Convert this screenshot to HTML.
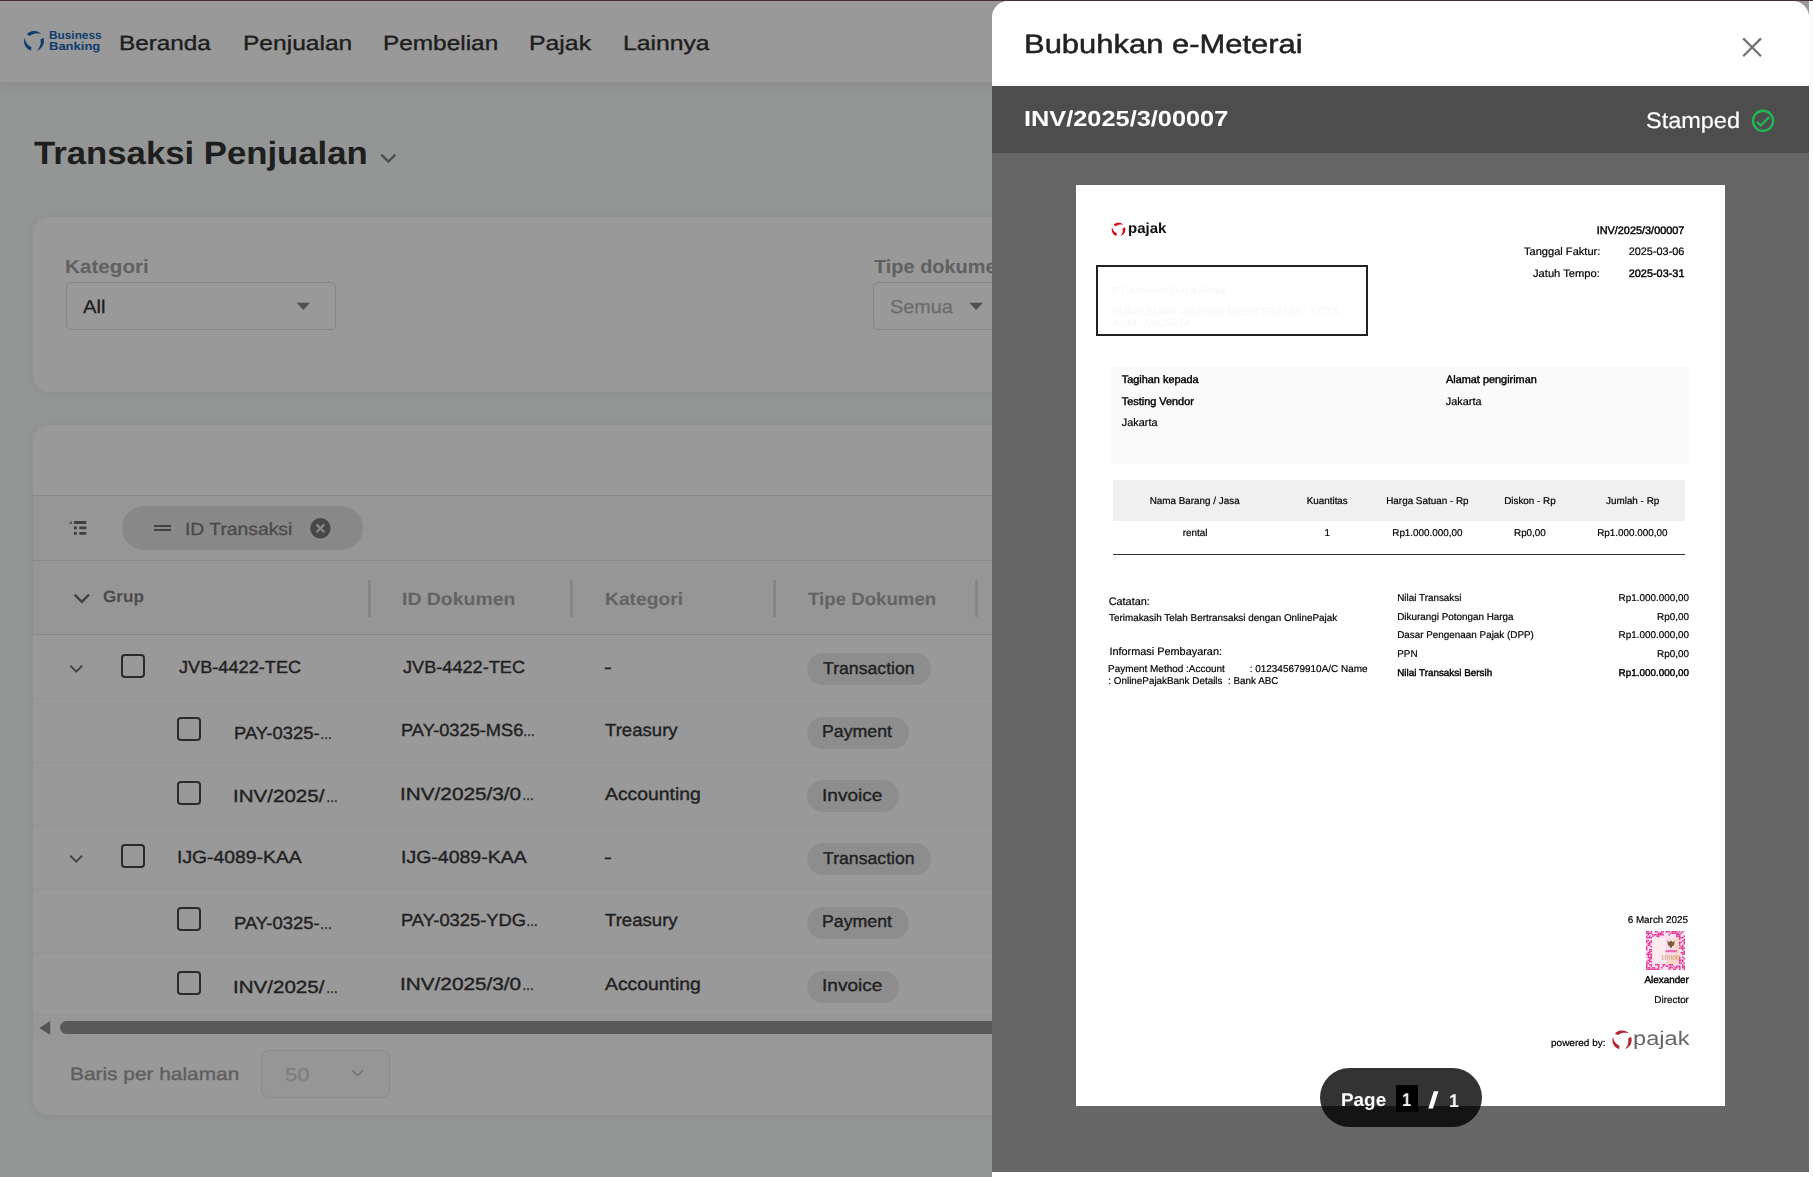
<!DOCTYPE html>
<html lang="id">
<head>
<meta charset="utf-8">
<title>Transaksi Penjualan - Bubuhkan e-Meterai</title>
<style>
html,body{margin:0;padding:0;}
body{width:1813px;height:1177px;overflow:hidden;position:relative;background:#f7faf9;
  font-family:"Liberation Sans",sans-serif;text-rendering:geometricPrecision;-webkit-font-smoothing:antialiased;}
.t{position:absolute;white-space:nowrap;line-height:1;transform-origin:0 0;display:block;}
.abs{position:absolute;}
.g{will-change:transform;}
#app{position:absolute;left:0;top:0;width:1809px;height:1177px;overflow:hidden;background:#f7faf9;}
#nav{position:absolute;left:0;top:0;width:1809px;height:82px;background:#fff;box-shadow:0 3px 10px rgba(0,0,0,.07);}
.card{position:absolute;background:#fff;border-radius:16px;box-shadow:0 1px 10px rgba(0,0,0,.07);}
.sel{position:absolute;box-sizing:border-box;border:1px solid #dcdcdc;border-radius:5px;background:#fff;}
.chip{position:absolute;background:#ececec;border-radius:16px;height:32px;}
.cb{position:absolute;box-sizing:border-box;width:24px;height:24px;border:2.9px solid #484848;border-radius:4px;}
.hl{position:absolute;left:0;height:1px;background:#e6e6e6;}
.sep{position:absolute;width:3px;top:154.5px;height:37px;background:#e0e0e0;}
#overlay{position:absolute;left:0;top:0;width:1809px;height:1177px;background:rgba(0,0,0,.4);}
#panel{position:absolute;left:992px;top:1px;width:817px;height:1176px;background:#fff;border-radius:16px 16px 0 0;overflow:hidden;}
#bar{position:absolute;left:0;top:85px;width:817px;height:67px;background:#4d4d4d;}
#viewer{position:absolute;left:0;top:152px;width:817px;height:1019px;background:#666;}
#doc{position:absolute;left:84px;top:32px;width:649px;height:921px;background:#fff;overflow:hidden;}
#docin{position:absolute;left:0;top:0;width:649px;height:921px;will-change:transform;}
#pill{position:absolute;left:328px;top:915px;width:162px;height:59px;border-radius:30px;background:rgba(0,0,0,.8);}
#topline{position:absolute;left:0;top:0;width:1813px;height:1px;background:#4e2c36;}
#rstrip{position:absolute;left:1809px;top:1px;width:4px;height:1176px;background:#fbfbfb;}
</style>
</head>
<body>

<div id="app">
<div id="nav">
<svg class="abs" style="left:21.75px;top:28.8px" width="24" height="24" viewBox="-12 -12 24 24"><g fill="#1a66b8"><path d="M-7.31,-6.82 L-6.48,-7.62 L-5.55,-8.32 L-4.55,-8.90 L-3.49,-9.37 L-2.38,-9.71 L-1.24,-9.92 L-0.09,-10.00 L1.07,-9.94 L2.21,-9.75 L3.33,-9.43 L4.39,-8.98 L5.40,-8.41 L6.34,-7.73 L7.19,-6.95 L7.19,-6.95 L6.07,-7.29 L4.99,-7.52 L3.95,-7.64 L2.97,-7.67 L2.03,-7.62 L1.15,-7.50 L0.32,-7.33 L-0.46,-7.11 L-1.20,-6.85 L-1.90,-6.55 L-2.55,-6.21 L-3.18,-5.84 L-3.77,-5.43 L-4.33,-4.98Z"/><path d="M9.46,-3.26 L9.77,-2.14 L9.95,-1.00 L10.00,0.16 L9.91,1.32 L9.69,2.46 L9.34,3.56 L8.87,4.62 L8.28,5.61 L7.57,6.53 L6.77,7.36 L5.87,8.10 L4.89,8.72 L3.85,9.23 L2.76,9.61 L2.76,9.61 L3.59,8.78 L4.30,7.93 L4.89,7.08 L5.38,6.22 L5.77,5.37 L6.09,4.54 L6.32,3.73 L6.50,2.93 L6.61,2.16 L6.67,1.40 L6.68,0.66 L6.65,-0.07 L6.56,-0.78 L6.43,-1.48Z"/><path d="M-2.92,9.56 L-4.01,9.16 L-5.04,8.64 L-6.01,7.99 L-6.89,7.25 L-7.68,6.40 L-8.37,5.47 L-8.95,4.46 L-9.41,3.40 L-9.74,2.29 L-9.93,1.14 L-10.00,-0.01 L-9.93,-1.17 L-9.73,-2.31 L-9.40,-3.42 L-9.40,-3.42 L-9.22,-2.26 L-8.94,-1.19 L-8.60,-0.20 L-8.19,0.70 L-7.74,1.51 L-7.25,2.26 L-6.73,2.93 L-6.19,3.53 L-5.63,4.08 L-5.05,4.57 L-4.46,5.02 L-3.85,5.42 L-3.23,5.77 L-2.58,6.08Z"/></g></svg>
<span class="t" style="left:48.83px;top:31px;font-size:11.5px;color:#1a66b8;font-weight:700;transform:scaleX(1.0287);">Business</span>
<span class="t" style="left:48.75px;top:42px;font-size:11.5px;color:#1a66b8;font-weight:700;transform:scaleX(1.1305);">Banking</span>
<span class="t" style="left:118.66px;top:34px;font-size:20.6px;color:#333;transform:scaleX(1.1792);-webkit-text-stroke:.35px #333;">Beranda</span>
<span class="t" style="left:243.34px;top:34px;font-size:20.6px;color:#333;transform:scaleX(1.1919);-webkit-text-stroke:.35px #333;">Penjualan</span>
<span class="t" style="left:383.25px;top:34px;font-size:20.6px;color:#333;transform:scaleX(1.1837);-webkit-text-stroke:.35px #333;">Pembelian</span>
<span class="t" style="left:529.21px;top:34px;font-size:20.6px;color:#333;transform:scaleX(1.2051);-webkit-text-stroke:.35px #333;">Pajak</span>
<span class="t" style="left:623.22px;top:34px;font-size:20.6px;color:#333;transform:scaleX(1.1991);-webkit-text-stroke:.35px #333;">Lainnya</span>
</div>
<span class="t" style="left:34.25px;top:137px;font-size:32.2px;color:#333;font-weight:700;transform:scaleX(1.0783);">Transaksi Penjualan</span>
<svg class="abs" style="left:378px;top:150px" width="20" height="16" viewBox="0 0 20 16"><path d="M3.3,4.6 L10.3,11.6 L17.3,4.6" fill="none" stroke="#7a828b" stroke-width="2.2"/></svg>
<div class="card" style="left:33px;top:217px;width:1800px;height:175px;"></div>
<span class="t" style="left:65.06px;top:258px;font-size:19px;color:#a2a2a2;font-weight:700;transform:scaleX(1.0875);">Kategori</span>
<div class="sel" style="left:66px;top:282px;width:270px;height:48px;"></div>
<span class="t" style="left:82.50px;top:298px;font-size:18.6px;color:#333;transform:scaleX(1.0906);-webkit-text-stroke:.25px #333;">All</span>
<svg class="abs" style="left:296px;top:302px" width="15" height="9" viewBox="0 0 15 9"><path d="M0.6,0.8 H14 L7.3,8 Z" fill="#858585"/></svg>
<span class="t" style="left:874.00px;top:258px;font-size:19px;color:#a0a0a0;font-weight:700;transform:scaleX(1.0487);">Tipe dokumen</span>
<div class="sel" style="left:873px;top:282px;width:270px;height:48px;"></div>
<span class="t" style="left:889.71px;top:298px;font-size:18.6px;color:#b4b4b4;transform:scaleX(1.0649);-webkit-text-stroke:.25px #b4b4b4;">Semua</span>
<svg class="abs" style="left:969px;top:302px" width="15" height="9" viewBox="0 0 15 9"><path d="M0.4,0.8 H14 L7.2,8 Z" fill="#858585"/></svg>
<div class="card" style="left:33px;top:425px;width:1800px;height:690px;overflow:hidden;">
<div class="abs" style="left:0;top:70px;width:1800px;height:139px;background:#f8faf9;"></div>
<div class="hl" style="top:69.5px;width:1800px;background:#e4e4e4;"></div>
<div class="hl" style="top:135px;width:1800px;background:#e4e4e4;"></div>
<div class="hl" style="top:209px;width:1800px;background:#e0e0e0;"></div>
<div class="hl" style="top:273px;width:1800px;background:#f7f7f7;"></div>
<div class="hl" style="top:336.5px;width:1800px;background:#f7f7f7;"></div>
<div class="hl" style="top:400px;width:1800px;background:#f7f7f7;"></div>
<div class="hl" style="top:463px;width:1800px;background:#f7f7f7;"></div>
<div class="hl" style="top:526.5px;width:1800px;background:#f7f7f7;"></div>
<div class="hl" style="top:590px;width:1800px;background:#f7f7f7;"></div>
<div class="sep" style="left:335.0px;"></div>
<div class="sep" style="left:537.1px;"></div>
<div class="sep" style="left:740.0px;"></div>
<div class="sep" style="left:942.3px;"></div>
</div>
<svg class="abs" style="left:68px;top:520px" width="20" height="16" viewBox="0 0 20 16">
<g fill="#6c6c6c"><path d="M0.8,3.8 L3.7,1.1 V3.8 Z"/><rect x="5.9" y="1.1" width="12.5" height="2.8" rx=".8"/>
<rect x="5.9" y="6.5" width="3" height="2.8"/><rect x="11.2" y="6.5" width="7.2" height="2.8" rx=".8"/>
<rect x="5.9" y="11.9" width="3" height="2.8"/><rect x="11.2" y="11.9" width="7.2" height="2.8" rx=".8"/></g></svg>
<div class="abs" style="left:122px;top:506px;width:241px;height:44px;border-radius:22px;background:#e3e3e3;"></div>
<div class="abs" style="left:154.2px;top:524.9px;width:16.4px;height:2.3px;background:#6e6e6e;"></div>
<div class="abs" style="left:154.2px;top:528.8px;width:16.4px;height:2.3px;background:#6e6e6e;"></div>
<span class="t" style="left:185.06px;top:521px;font-size:17.5px;color:#7c7c7c;transform:scaleX(1.1026);-webkit-text-stroke:.3px #7c7c7c;">ID Transaksi</span>
<svg class="abs" style="left:309.5px;top:517.8px" width="21" height="21" viewBox="0 0 21 21"><circle cx="10.4" cy="10.3" r="10.2" fill="#787878"/><path d="M6.5,6.4 L14.3,14.2 M14.3,6.4 L6.5,14.2" stroke="#e3e3e3" stroke-width="2.2" fill="none"/></svg>
<svg class="abs" style="left:72px;top:590px" width="20" height="16" viewBox="0 0 20 16"><path d="M2.6,4.6 L9.8,11.8 L17,4.6" fill="none" stroke="#6a6a6a" stroke-width="2.3"/></svg>
<span class="t" style="left:102.82px;top:589px;font-size:16.4px;color:#7e7e7e;font-weight:700;transform:scaleX(1.0427);">Grup</span>
<span class="t" style="left:402.24px;top:591px;font-size:17.8px;color:#a6a6a6;font-weight:700;transform:scaleX(1.0931);">ID Dokumen</span>
<span class="t" style="left:604.75px;top:591px;font-size:17.8px;color:#a6a6a6;font-weight:700;transform:scaleX(1.0821);">Kategori</span>
<span class="t" style="left:808.21px;top:591px;font-size:17.8px;color:#a6a6a6;font-weight:700;transform:scaleX(1.0492);">Tipe Dokumen</span>
<svg class="abs" style="left:68px;top:662.8px" width="16" height="12" viewBox="0 0 16 12"><path d="M2.2,2.6 L8.2,8.6 L14.2,2.6" fill="none" stroke="#707070" stroke-width="2"/></svg>
<div class="cb" style="left:120.8px;top:654.3px;"></div>
<span class="t" style="left:178.73px;top:659px;font-size:17.6px;color:#383838;transform:scaleX(1.0325);-webkit-text-stroke:.38px #383838;">JVB-4422-TEC</span>
<span class="t" style="left:402.53px;top:659px;font-size:17.6px;color:#383838;transform:scaleX(1.0317);-webkit-text-stroke:.38px #383838;">JVB-4422-TEC</span>
<span class="t" style="left:603.87px;top:659px;font-size:17.6px;color:#383838;transform:scaleX(1.3182);-webkit-text-stroke:.38px #383838;">-</span>
<div class="chip" style="left:807px;top:652.9px;width:123.8px;"></div><span class="t" style="left:823.45px;top:660px;font-size:17px;color:#383838;transform:scaleX(1.0394);-webkit-text-stroke:.38px #383838;">Transaction</span>
<div class="cb" style="left:177.3px;top:717.4px;"></div>
<span class="t" style="left:233.83px;top:725px;font-size:17.6px;color:#383838;transform:scaleX(1.0448);-webkit-text-stroke:.38px #383838;">PAY-0325-</span><span class="t" style="left:319.57px;top:725px;font-size:17.6px;color:#383838;transform:scaleX(0.6849);-webkit-text-stroke:.38px #383838;">…</span>
<span class="t" style="left:400.84px;top:722px;font-size:17.6px;color:#383838;transform:scaleX(1.0371);-webkit-text-stroke:.38px #383838;">PAY-0325-MS6</span><span class="t" style="left:523.47px;top:722px;font-size:17.6px;color:#383838;transform:scaleX(0.6849);-webkit-text-stroke:.38px #383838;">…</span>
<span class="t" style="left:604.83px;top:722px;font-size:17.6px;color:#383838;transform:scaleX(1.0560);-webkit-text-stroke:.38px #383838;">Treasury</span>
<div class="chip" style="left:807px;top:716.8px;width:102.1px;"></div><span class="t" style="left:822.38px;top:723px;font-size:17px;color:#383838;transform:scaleX(1.0425);-webkit-text-stroke:.38px #383838;">Payment</span>
<div class="cb" style="left:177.3px;top:780.9px;"></div>
<span class="t" style="left:233.45px;top:788px;font-size:17.6px;color:#383838;transform:scaleX(1.1676);-webkit-text-stroke:.38px #383838;">INV/2025/</span><span class="t" style="left:325.87px;top:788px;font-size:17.6px;color:#383838;transform:scaleX(0.6849);-webkit-text-stroke:.38px #383838;">…</span>
<span class="t" style="left:400.43px;top:786px;font-size:17.6px;color:#383838;transform:scaleX(1.1792);-webkit-text-stroke:.38px #383838;">INV/2025/3/0</span><span class="t" style="left:521.77px;top:786px;font-size:17.6px;color:#383838;transform:scaleX(0.6849);-webkit-text-stroke:.38px #383838;">…</span>
<span class="t" style="left:605.20px;top:786px;font-size:17.6px;color:#383838;transform:scaleX(1.1003);-webkit-text-stroke:.38px #383838;">Accounting</span>
<div class="chip" style="left:807px;top:780.3px;width:91.5px;"></div><span class="t" style="left:822.08px;top:787px;font-size:17px;color:#383838;transform:scaleX(1.1222);-webkit-text-stroke:.38px #383838;">Invoice</span>
<svg class="abs" style="left:68px;top:852.5999999999999px" width="16" height="12" viewBox="0 0 16 12"><path d="M2.2,2.6 L8.2,8.6 L14.2,2.6" fill="none" stroke="#707070" stroke-width="2"/></svg>
<div class="cb" style="left:120.8px;top:844.0999999999999px;"></div>
<span class="t" style="left:177.26px;top:849px;font-size:17.6px;color:#383838;transform:scaleX(1.0997);-webkit-text-stroke:.38px #383838;">IJG-4089-KAA</span>
<span class="t" style="left:401.05px;top:849px;font-size:17.6px;color:#383838;transform:scaleX(1.1078);-webkit-text-stroke:.38px #383838;">IJG-4089-KAA</span>
<span class="t" style="left:603.87px;top:849px;font-size:17.6px;color:#383838;transform:scaleX(1.3182);-webkit-text-stroke:.38px #383838;">-</span>
<div class="chip" style="left:807px;top:842.6999999999999px;width:123.8px;"></div><span class="t" style="left:823.45px;top:850px;font-size:17px;color:#383838;transform:scaleX(1.0394);-webkit-text-stroke:.38px #383838;">Transaction</span>
<div class="cb" style="left:177.3px;top:907.1999999999999px;"></div>
<span class="t" style="left:233.83px;top:915px;font-size:17.6px;color:#383838;transform:scaleX(1.0448);-webkit-text-stroke:.38px #383838;">PAY-0325-</span><span class="t" style="left:319.57px;top:915px;font-size:17.6px;color:#383838;transform:scaleX(0.6849);-webkit-text-stroke:.38px #383838;">…</span>
<span class="t" style="left:400.83px;top:912px;font-size:17.6px;color:#383838;transform:scaleX(1.0426);-webkit-text-stroke:.38px #383838;">PAY-0325-YDG</span><span class="t" style="left:525.57px;top:912px;font-size:17.6px;color:#383838;transform:scaleX(0.6849);-webkit-text-stroke:.38px #383838;">…</span>
<span class="t" style="left:604.83px;top:912px;font-size:17.6px;color:#383838;transform:scaleX(1.0560);-webkit-text-stroke:.38px #383838;">Treasury</span>
<div class="chip" style="left:807px;top:906.5999999999999px;width:102.1px;"></div><span class="t" style="left:822.38px;top:913px;font-size:17px;color:#383838;transform:scaleX(1.0425);-webkit-text-stroke:.38px #383838;">Payment</span>
<div class="cb" style="left:177.3px;top:971.1999999999999px;"></div>
<span class="t" style="left:233.45px;top:979px;font-size:17.6px;color:#383838;transform:scaleX(1.1676);-webkit-text-stroke:.38px #383838;">INV/2025/</span><span class="t" style="left:325.87px;top:979px;font-size:17.6px;color:#383838;transform:scaleX(0.6849);-webkit-text-stroke:.38px #383838;">…</span>
<span class="t" style="left:400.43px;top:976px;font-size:17.6px;color:#383838;transform:scaleX(1.1792);-webkit-text-stroke:.38px #383838;">INV/2025/3/0</span><span class="t" style="left:521.77px;top:976px;font-size:17.6px;color:#383838;transform:scaleX(0.6849);-webkit-text-stroke:.38px #383838;">…</span>
<span class="t" style="left:605.20px;top:976px;font-size:17.6px;color:#383838;transform:scaleX(1.1003);-webkit-text-stroke:.38px #383838;">Accounting</span>
<div class="chip" style="left:807px;top:970.5999999999999px;width:91.5px;"></div><span class="t" style="left:822.08px;top:977px;font-size:17px;color:#383838;transform:scaleX(1.1222);-webkit-text-stroke:.38px #383838;">Invoice</span>
<div class="abs" style="left:33px;top:1016.5px;width:1780px;height:23px;background:#fcfcfc;"></div>
<svg class="abs" style="left:38px;top:1020px" width="14" height="16" viewBox="0 0 14 16"><path d="M1.3,7.9 L12.2,1 V14.8 Z" fill="#8c8c8c"/></svg>
<div class="abs" style="left:59.7px;top:1021px;width:1700px;height:13px;border-radius:6.5px;background:#959595;"></div>
<span class="t" style="left:70.33px;top:1066px;font-size:17.8px;color:#9e9e9e;transform:scaleX(1.1729);-webkit-text-stroke:.35px #9e9e9e;">Baris per halaman</span>
<div class="sel" style="left:261px;top:1050px;width:129px;height:47.5px;border-radius:8px;border-color:#e6e6e6;background:#fbfbfb;"></div>
<span class="t" style="left:285.32px;top:1066px;font-size:18.4px;color:#d2d2d2;transform:scaleX(1.1972);-webkit-text-stroke:.3px #d2d2d2;">50</span>
<svg class="abs" style="left:350px;top:1068px" width="16" height="12" viewBox="0 0 16 12"><path d="M2.4,2.6 L7.6,7.6 L12.8,2.6" fill="none" stroke="#c4c4c4" stroke-width="1.8"/></svg>
</div>
<div id="overlay"></div>
<div id="panel">
<span class="t g" style="left:32.12px;top:30px;font-size:26.4px;color:#222;transform:scaleX(1.1723);-webkit-text-stroke:.5px #222;">Bubuhkan e-Meterai</span>
<svg class="abs" style="left:749px;top:35px" width="22" height="22" viewBox="0 0 22 22"><path d="M2.2,2.4 L20,20.2 M20,2.4 L2.2,20.2" stroke="#757575" stroke-width="2.3" fill="none"/></svg>
<div id="bar">
<span class="t g" style="left:32.15px;top:22px;font-size:21.8px;color:#fff;font-weight:700;transform:scaleX(1.1625);">INV/2025/3/00007</span>
<span class="t g" style="left:653.54px;top:24px;font-size:22.4px;color:#fff;transform:scaleX(1.0487);-webkit-text-stroke:.2px #fff;">Stamped</span>
<svg class="abs" style="left:758px;top:22px" width="26" height="26" viewBox="0 0 26 26"><circle cx="13.05" cy="12.85" r="10.1" fill="none" stroke="#1eb955" stroke-width="2.3"/><path d="M6.9,13.8 L10.7,17.5 L19.2,9" fill="none" stroke="#1eb955" stroke-width="2.3"/></svg>
</div>
<div id="viewer">
<div id="doc"><div id="docin">
<svg class="abs" style="left:34px;top:35.599999999999994px" width="17" height="17" viewBox="-8.5 -8.5 17 17"><g fill="#e00010"><path d="M-4.97,-4.64 L-4.40,-5.18 L-3.77,-5.66 L-3.09,-6.05 L-2.37,-6.37 L-1.62,-6.60 L-0.85,-6.75 L-0.06,-6.80 L0.73,-6.76 L1.50,-6.63 L2.26,-6.41 L2.99,-6.11 L3.68,-5.72 L4.31,-5.26 L4.89,-4.72 L4.89,-4.72 L4.10,-4.92 L3.35,-5.04 L2.63,-5.09 L1.96,-5.07 L1.34,-5.01 L0.75,-4.90 L0.21,-4.76 L-0.30,-4.59 L-0.77,-4.40 L-1.21,-4.19 L-1.63,-3.97 L-2.03,-3.72 L-2.40,-3.46 L-2.76,-3.17Z"/><path d="M6.43,-2.21 L6.64,-1.46 L6.77,-0.68 L6.80,0.11 L6.74,0.90 L6.59,1.67 L6.35,2.42 L6.03,3.14 L5.63,3.82 L5.15,4.44 L4.60,5.01 L3.99,5.51 L3.33,5.93 L2.62,6.28 L1.87,6.54 L1.87,6.54 L2.42,5.93 L2.88,5.32 L3.26,4.71 L3.56,4.11 L3.80,3.53 L3.98,2.96 L4.11,2.42 L4.20,1.89 L4.25,1.39 L4.27,0.90 L4.27,0.42 L4.24,-0.04 L4.18,-0.50 L4.09,-0.94Z"/><path d="M-1.99,6.50 L-2.73,6.23 L-3.43,5.87 L-4.09,5.44 L-4.69,4.93 L-5.23,4.35 L-5.69,3.72 L-6.09,3.03 L-6.40,2.31 L-6.62,1.55 L-6.76,0.78 L-6.80,-0.01 L-6.75,-0.80 L-6.62,-1.57 L-6.39,-2.33 L-6.39,-2.33 L-6.22,-1.53 L-6.00,-0.80 L-5.73,-0.14 L-5.42,0.46 L-5.09,1.00 L-4.74,1.47 L-4.37,1.90 L-4.00,2.28 L-3.62,2.62 L-3.24,2.93 L-2.85,3.20 L-2.46,3.45 L-2.05,3.67 L-1.64,3.87Z"/></g></svg>
<span class="t" style="left:52.23px;top:37px;font-size:14.6px;color:#111;font-weight:700;transform:scaleX(1.0267);">pajak</span>
<span class="t" style="left:520.64px;top:41px;font-size:10.9px;color:#000;-webkit-text-stroke:.42px #000;">INV/2025/3/00007</span>
<span class="t" style="left:447.58px;top:62px;font-size:10.9px;color:#000;transform:scaleX(1.0168);-webkit-text-stroke:.2px #000;">Tanggal Faktur:</span>
<span class="t" style="left:552.68px;top:62px;font-size:10.9px;color:#000;-webkit-text-stroke:.2px #000;">2025-03-06</span>
<span class="t" style="left:457.03px;top:84px;font-size:10.9px;color:#000;transform:scaleX(1.0258);-webkit-text-stroke:.2px #000;">Jatuh Tempo:</span>
<span class="t" style="left:552.74px;top:84px;font-size:10.9px;color:#000;-webkit-text-stroke:.42px #000;">2025-03-31</span>
<div class="abs" style="left:20px;top:80px;width:271.5px;height:70.5px;box-sizing:border-box;border:2px solid #222;"></div>
<span class="t" style="left:35.63px;top:101px;font-size:10.9px;color:#f7f7f7;">PT Andalan Daya Abadi</span>
<span class="t" style="left:35.63px;top:122px;font-size:10.9px;color:#f7f7f7;">RUKO BUKIT GADING MEDITERANIA - KOTA</span>
<span class="t" style="left:36.50px;top:134px;font-size:10.9px;color:#f7f7f7;">ADM. JAKARTA</span>
<div class="abs" style="left:35px;top:181.5px;width:578px;height:97px;background:#fafafa;"></div>
<span class="t" style="left:45.78px;top:190px;font-size:10.9px;color:#000;-webkit-text-stroke:.42px #000;">Tagihan kepada</span>
<span class="t" style="left:45.78px;top:212px;font-size:10.9px;color:#000;-webkit-text-stroke:.42px #000;">Testing Vendor</span>
<span class="t" style="left:45.84px;top:233px;font-size:10.9px;color:#000;-webkit-text-stroke:.2px #000;">Jakarta</span>
<span class="t" style="left:370.00px;top:190px;font-size:10.9px;color:#000;-webkit-text-stroke:.42px #000;">Alamat pengiriman</span>
<span class="t" style="left:369.84px;top:212px;font-size:10.9px;color:#000;-webkit-text-stroke:.2px #000;">Jakarta</span>
<div class="abs" style="left:37px;top:295px;width:572px;height:40.5px;background:#f0f0f0;"></div>
<span class="t" style="left:73.66px;top:312px;font-size:9.9px;color:#000;-webkit-text-stroke:.2px #000;">Nama Barang / Jasa</span>
<span class="t" style="left:230.64px;top:312px;font-size:9.9px;color:#000;-webkit-text-stroke:.2px #000;">Kuantitas</span>
<span class="t" style="left:310.24px;top:312px;font-size:9.9px;color:#000;-webkit-text-stroke:.2px #000;">Harga Satuan - Rp</span>
<span class="t" style="left:428.14px;top:312px;font-size:9.9px;color:#000;-webkit-text-stroke:.2px #000;">Diskon - Rp</span>
<span class="t" style="left:530.04px;top:312px;font-size:9.9px;color:#000;-webkit-text-stroke:.2px #000;">Jumlah - Rp</span>
<span class="t" style="left:106.80px;top:344px;font-size:9.9px;color:#000;-webkit-text-stroke:.2px #000;">rental</span>
<span class="t" style="left:248.60px;top:344px;font-size:9.9px;color:#000;-webkit-text-stroke:.2px #000;">1</span>
<span class="t" style="left:316.26px;top:344px;font-size:9.9px;color:#000;-webkit-text-stroke:.2px #000;">Rp1.000.000,00</span>
<span class="t" style="left:438.01px;top:344px;font-size:9.9px;color:#000;-webkit-text-stroke:.2px #000;">Rp0,00</span>
<span class="t" style="left:521.16px;top:344px;font-size:9.9px;color:#000;-webkit-text-stroke:.2px #000;">Rp1.000.000,00</span>
<div class="abs" style="left:37px;top:369px;width:572px;height:1px;background:#333;"></div>
<span class="t" style="left:32.66px;top:412px;font-size:10.9px;color:#000;-webkit-text-stroke:.2px #000;">Catatan:</span>
<span class="t" style="left:33.00px;top:429px;font-size:9.9px;color:#000;-webkit-text-stroke:.2px #000;">Terimakasih Telah Bertransaksi dengan OnlinePajak</span>
<span class="t" style="left:33.42px;top:462px;font-size:10.9px;color:#000;-webkit-text-stroke:.2px #000;">Informasi Pembayaran:</span>
<span class="t" style="left:32.40px;top:480px;font-size:9.9px;color:#000;transform:scaleX(1.0082);-webkit-text-stroke:.2px #000;white-space:pre;">Payment Method :Account         : 012345679910A/C Name</span>
<span class="t" style="left:32.31px;top:492px;font-size:9.9px;color:#000;-webkit-text-stroke:.2px #000;white-space:pre;">: OnlinePajakBank Details  : Bank ABC</span>
<span class="t" style="left:321.21px;top:409px;font-size:9.9px;color:#000;-webkit-text-stroke:.2px #000;">Nilai Transaksi</span>
<span class="t" style="left:542.61px;top:409px;font-size:9.9px;color:#000;-webkit-text-stroke:.2px #000;">Rp1.000.000,00</span>
<span class="t" style="left:321.21px;top:428px;font-size:9.9px;color:#000;-webkit-text-stroke:.2px #000;">Dikurangi Potongan Harga</span>
<span class="t" style="left:581.12px;top:428px;font-size:9.9px;color:#000;-webkit-text-stroke:.2px #000;">Rp0,00</span>
<span class="t" style="left:321.21px;top:446px;font-size:9.9px;color:#000;-webkit-text-stroke:.2px #000;">Dasar Pengenaan Pajak (DPP)</span>
<span class="t" style="left:542.61px;top:446px;font-size:9.9px;color:#000;-webkit-text-stroke:.2px #000;">Rp1.000.000,00</span>
<span class="t" style="left:321.21px;top:465px;font-size:9.9px;color:#000;-webkit-text-stroke:.2px #000;">PPN</span>
<span class="t" style="left:581.12px;top:465px;font-size:9.9px;color:#000;-webkit-text-stroke:.2px #000;">Rp0,00</span>
<span class="t" style="left:321.21px;top:484px;font-size:9.9px;color:#000;-webkit-text-stroke:.42px #000;">Nilai Transaksi Bersih</span>
<span class="t" style="left:542.61px;top:484px;font-size:9.9px;color:#000;-webkit-text-stroke:.42px #000;">Rp1.000.000,00</span>
<span class="t" style="left:551.66px;top:731px;font-size:9.9px;color:#000;-webkit-text-stroke:.2px #000;">6 March 2025</span>
<span class="t" style="left:568.45px;top:791px;font-size:9.9px;color:#000;-webkit-text-stroke:.42px #000;">Alexander</span>
<span class="t" style="left:578.35px;top:811px;font-size:9.9px;color:#000;-webkit-text-stroke:.2px #000;">Director</span>
<span class="t" style="left:474.90px;top:854px;font-size:9.6px;color:#000;transform:scaleX(1.0436);-webkit-text-stroke:.2px #000;">powered by:</span>
<svg class="abs" style="left:570.2px;top:746px" width="39" height="39" viewBox="0 0 39 39"><rect width="39" height="39" fill="#fce4f0"/><g fill="#e5399a"><rect x="0.00" y="0.00" width="1.50" height="1.50"/><rect x="0.00" y="1.50" width="1.50" height="1.50"/><rect x="0.00" y="4.50" width="1.50" height="1.50"/><rect x="0.00" y="6.00" width="1.50" height="1.50"/><rect x="0.00" y="9.00" width="1.50" height="1.50"/><rect x="0.00" y="10.50" width="1.50" height="1.50"/><rect x="0.00" y="15.00" width="1.50" height="1.50"/><rect x="0.00" y="16.50" width="1.50" height="1.50"/><rect x="0.00" y="18.00" width="1.50" height="1.50"/><rect x="0.00" y="22.50" width="1.50" height="1.50"/><rect x="0.00" y="30.00" width="1.50" height="1.50"/><rect x="0.00" y="31.50" width="1.50" height="1.50"/><rect x="0.00" y="33.00" width="1.50" height="1.50"/><rect x="0.00" y="34.50" width="1.50" height="1.50"/><rect x="0.00" y="36.00" width="1.50" height="1.50"/><rect x="0.00" y="37.50" width="1.50" height="1.50"/><rect x="1.50" y="0.00" width="1.50" height="1.50"/><rect x="1.50" y="1.50" width="1.50" height="1.50"/><rect x="1.50" y="3.00" width="1.50" height="1.50"/><rect x="1.50" y="6.00" width="1.50" height="1.50"/><rect x="1.50" y="9.00" width="1.50" height="1.50"/><rect x="1.50" y="12.00" width="1.50" height="1.50"/><rect x="1.50" y="13.50" width="1.50" height="1.50"/><rect x="1.50" y="21.00" width="1.50" height="1.50"/><rect x="1.50" y="22.50" width="1.50" height="1.50"/><rect x="1.50" y="24.00" width="1.50" height="1.50"/><rect x="1.50" y="25.50" width="1.50" height="1.50"/><rect x="1.50" y="28.50" width="1.50" height="1.50"/><rect x="1.50" y="31.50" width="1.50" height="1.50"/><rect x="1.50" y="36.00" width="1.50" height="1.50"/><rect x="1.50" y="37.50" width="1.50" height="1.50"/><rect x="3.00" y="1.50" width="1.50" height="1.50"/><rect x="3.00" y="4.50" width="1.50" height="1.50"/><rect x="3.00" y="6.00" width="1.50" height="1.50"/><rect x="3.00" y="10.50" width="1.50" height="1.50"/><rect x="3.00" y="12.00" width="1.50" height="1.50"/><rect x="3.00" y="13.50" width="1.50" height="1.50"/><rect x="3.00" y="18.00" width="1.50" height="1.50"/><rect x="3.00" y="19.50" width="1.50" height="1.50"/><rect x="3.00" y="21.00" width="1.50" height="1.50"/><rect x="3.00" y="22.50" width="1.50" height="1.50"/><rect x="3.00" y="25.50" width="1.50" height="1.50"/><rect x="3.00" y="27.00" width="1.50" height="1.50"/><rect x="3.00" y="28.50" width="1.50" height="1.50"/><rect x="3.00" y="30.00" width="1.50" height="1.50"/><rect x="3.00" y="33.00" width="1.50" height="1.50"/><rect x="3.00" y="36.00" width="1.50" height="1.50"/><rect x="3.00" y="37.50" width="1.50" height="1.50"/><rect x="4.50" y="0.00" width="1.50" height="1.50"/><rect x="4.50" y="1.50" width="1.50" height="1.50"/><rect x="4.50" y="6.00" width="1.50" height="1.50"/><rect x="4.50" y="9.00" width="1.50" height="1.50"/><rect x="4.50" y="10.50" width="1.50" height="1.50"/><rect x="4.50" y="15.00" width="1.50" height="1.50"/><rect x="4.50" y="18.00" width="1.50" height="1.50"/><rect x="4.50" y="19.50" width="1.50" height="1.50"/><rect x="4.50" y="22.50" width="1.50" height="1.50"/><rect x="4.50" y="24.00" width="1.50" height="1.50"/><rect x="4.50" y="25.50" width="1.50" height="1.50"/><rect x="4.50" y="27.00" width="1.50" height="1.50"/><rect x="4.50" y="30.00" width="1.50" height="1.50"/><rect x="4.50" y="33.00" width="1.50" height="1.50"/><rect x="4.50" y="34.50" width="1.50" height="1.50"/><rect x="4.50" y="37.50" width="1.50" height="1.50"/><rect x="6.00" y="3.00" width="1.50" height="1.50"/><rect x="6.00" y="4.50" width="1.50" height="1.50"/><rect x="6.00" y="36.00" width="1.50" height="1.50"/><rect x="6.00" y="37.50" width="1.50" height="1.50"/><rect x="7.50" y="3.00" width="1.50" height="1.50"/><rect x="7.50" y="36.00" width="1.50" height="1.50"/><rect x="7.50" y="37.50" width="1.50" height="1.50"/><rect x="9.00" y="0.00" width="1.50" height="1.50"/><rect x="9.00" y="3.00" width="1.50" height="1.50"/><rect x="9.00" y="33.00" width="1.50" height="1.50"/><rect x="9.00" y="37.50" width="1.50" height="1.50"/><rect x="10.50" y="0.00" width="1.50" height="1.50"/><rect x="10.50" y="3.00" width="1.50" height="1.50"/><rect x="10.50" y="4.50" width="1.50" height="1.50"/><rect x="10.50" y="33.00" width="1.50" height="1.50"/><rect x="10.50" y="37.50" width="1.50" height="1.50"/><rect x="12.00" y="1.50" width="1.50" height="1.50"/><rect x="12.00" y="3.00" width="1.50" height="1.50"/><rect x="12.00" y="4.50" width="1.50" height="1.50"/><rect x="12.00" y="33.00" width="1.50" height="1.50"/><rect x="12.00" y="34.50" width="1.50" height="1.50"/><rect x="12.00" y="36.00" width="1.50" height="1.50"/><rect x="12.00" y="37.50" width="1.50" height="1.50"/><rect x="13.50" y="1.50" width="1.50" height="1.50"/><rect x="13.50" y="3.00" width="1.50" height="1.50"/><rect x="15.00" y="0.00" width="1.50" height="1.50"/><rect x="15.00" y="1.50" width="1.50" height="1.50"/><rect x="15.00" y="3.00" width="1.50" height="1.50"/><rect x="15.00" y="36.00" width="1.50" height="1.50"/><rect x="16.50" y="0.00" width="1.50" height="1.50"/><rect x="16.50" y="3.00" width="1.50" height="1.50"/><rect x="16.50" y="33.00" width="1.50" height="1.50"/><rect x="16.50" y="34.50" width="1.50" height="1.50"/><rect x="18.00" y="33.00" width="1.50" height="1.50"/><rect x="19.50" y="0.00" width="1.50" height="1.50"/><rect x="19.50" y="34.50" width="1.50" height="1.50"/><rect x="21.00" y="0.00" width="1.50" height="1.50"/><rect x="21.00" y="34.50" width="1.50" height="1.50"/><rect x="22.50" y="0.00" width="1.50" height="1.50"/><rect x="22.50" y="3.00" width="1.50" height="1.50"/><rect x="22.50" y="33.00" width="1.50" height="1.50"/><rect x="22.50" y="36.00" width="1.50" height="1.50"/><rect x="22.50" y="37.50" width="1.50" height="1.50"/><rect x="24.00" y="1.50" width="1.50" height="1.50"/><rect x="24.00" y="33.00" width="1.50" height="1.50"/><rect x="24.00" y="34.50" width="1.50" height="1.50"/><rect x="24.00" y="36.00" width="1.50" height="1.50"/><rect x="25.50" y="0.00" width="1.50" height="1.50"/><rect x="25.50" y="1.50" width="1.50" height="1.50"/><rect x="25.50" y="33.00" width="1.50" height="1.50"/><rect x="25.50" y="36.00" width="1.50" height="1.50"/><rect x="27.00" y="0.00" width="1.50" height="1.50"/><rect x="27.00" y="1.50" width="1.50" height="1.50"/><rect x="27.00" y="34.50" width="1.50" height="1.50"/><rect x="27.00" y="37.50" width="1.50" height="1.50"/><rect x="28.50" y="0.00" width="1.50" height="1.50"/><rect x="28.50" y="1.50" width="1.50" height="1.50"/><rect x="28.50" y="36.00" width="1.50" height="1.50"/><rect x="28.50" y="37.50" width="1.50" height="1.50"/><rect x="30.00" y="0.00" width="1.50" height="1.50"/><rect x="30.00" y="1.50" width="1.50" height="1.50"/><rect x="30.00" y="3.00" width="1.50" height="1.50"/><rect x="30.00" y="4.50" width="1.50" height="1.50"/><rect x="30.00" y="34.50" width="1.50" height="1.50"/><rect x="30.00" y="36.00" width="1.50" height="1.50"/><rect x="31.50" y="1.50" width="1.50" height="1.50"/><rect x="31.50" y="3.00" width="1.50" height="1.50"/><rect x="31.50" y="4.50" width="1.50" height="1.50"/><rect x="31.50" y="34.50" width="1.50" height="1.50"/><rect x="33.00" y="0.00" width="1.50" height="1.50"/><rect x="33.00" y="3.00" width="1.50" height="1.50"/><rect x="33.00" y="4.50" width="1.50" height="1.50"/><rect x="33.00" y="6.00" width="1.50" height="1.50"/><rect x="33.00" y="7.50" width="1.50" height="1.50"/><rect x="33.00" y="10.50" width="1.50" height="1.50"/><rect x="33.00" y="12.00" width="1.50" height="1.50"/><rect x="33.00" y="13.50" width="1.50" height="1.50"/><rect x="33.00" y="16.50" width="1.50" height="1.50"/><rect x="33.00" y="25.50" width="1.50" height="1.50"/><rect x="33.00" y="27.00" width="1.50" height="1.50"/><rect x="33.00" y="28.50" width="1.50" height="1.50"/><rect x="33.00" y="30.00" width="1.50" height="1.50"/><rect x="33.00" y="31.50" width="1.50" height="1.50"/><rect x="33.00" y="34.50" width="1.50" height="1.50"/><rect x="33.00" y="36.00" width="1.50" height="1.50"/><rect x="33.00" y="37.50" width="1.50" height="1.50"/><rect x="34.50" y="1.50" width="1.50" height="1.50"/><rect x="34.50" y="6.00" width="1.50" height="1.50"/><rect x="34.50" y="10.50" width="1.50" height="1.50"/><rect x="34.50" y="15.00" width="1.50" height="1.50"/><rect x="34.50" y="16.50" width="1.50" height="1.50"/><rect x="34.50" y="21.00" width="1.50" height="1.50"/><rect x="34.50" y="28.50" width="1.50" height="1.50"/><rect x="34.50" y="31.50" width="1.50" height="1.50"/><rect x="36.00" y="0.00" width="1.50" height="1.50"/><rect x="36.00" y="6.00" width="1.50" height="1.50"/><rect x="36.00" y="9.00" width="1.50" height="1.50"/><rect x="36.00" y="13.50" width="1.50" height="1.50"/><rect x="36.00" y="15.00" width="1.50" height="1.50"/><rect x="36.00" y="16.50" width="1.50" height="1.50"/><rect x="36.00" y="18.00" width="1.50" height="1.50"/><rect x="36.00" y="21.00" width="1.50" height="1.50"/><rect x="36.00" y="22.50" width="1.50" height="1.50"/><rect x="36.00" y="25.50" width="1.50" height="1.50"/><rect x="36.00" y="28.50" width="1.50" height="1.50"/><rect x="36.00" y="30.00" width="1.50" height="1.50"/><rect x="36.00" y="33.00" width="1.50" height="1.50"/><rect x="36.00" y="34.50" width="1.50" height="1.50"/><rect x="36.00" y="36.00" width="1.50" height="1.50"/><rect x="37.50" y="4.50" width="1.50" height="1.50"/><rect x="37.50" y="7.50" width="1.50" height="1.50"/><rect x="37.50" y="9.00" width="1.50" height="1.50"/><rect x="37.50" y="10.50" width="1.50" height="1.50"/><rect x="37.50" y="12.00" width="1.50" height="1.50"/><rect x="37.50" y="16.50" width="1.50" height="1.50"/><rect x="37.50" y="19.50" width="1.50" height="1.50"/><rect x="37.50" y="21.00" width="1.50" height="1.50"/><rect x="37.50" y="22.50" width="1.50" height="1.50"/><rect x="37.50" y="27.00" width="1.50" height="1.50"/><rect x="37.50" y="31.50" width="1.50" height="1.50"/><rect x="37.50" y="34.50" width="1.50" height="1.50"/><rect x="37.50" y="36.00" width="1.50" height="1.50"/><rect x="37.50" y="37.50" width="1.50" height="1.50"/></g><rect x="6" y="6" width="27" height="27" fill="#fbdbe7"/><rect x="6.5" y="7" width="13" height="25" fill="#fdebf1"/><path d="M29,6 h4 v27 h-16 l12,-8 z" fill="#fad7a8" opacity=".55"/><path d="M21.2,9.6 l2.3,1.6 l1.5,-2 l1.5,2 l2.3,-1.6 l-.9,4.6 l-1.6,1 l-1.3,2.6 l-1.3,-2.6 l-1.6,-1 z" fill="#7a5a34"/><rect x="19.5" y="19" width="11.5" height="2.2" fill="#ee6fae"/><text x="24.3" y="28.6" font-family="Liberation Serif,serif" font-size="7.6" text-anchor="middle" fill="#c29a62">10000</text></svg>
<svg class="abs" style="left:533.5px;top:843.3px" width="24" height="24" viewBox="-12 -12 24 24"><g fill="#b5242f"><path d="M-7.02,-6.55 L-6.22,-7.32 L-5.33,-7.99 L-4.37,-8.55 L-3.35,-9.00 L-2.29,-9.32 L-1.19,-9.53 L-0.08,-9.60 L1.03,-9.54 L2.12,-9.36 L3.19,-9.05 L4.22,-8.62 L5.19,-8.08 L6.09,-7.42 L6.91,-6.67 L6.91,-6.67 L5.83,-7.00 L4.78,-7.21 L3.79,-7.32 L2.84,-7.34 L1.94,-7.29 L1.10,-7.18 L0.31,-7.01 L-0.44,-6.80 L-1.15,-6.54 L-1.81,-6.25 L-2.44,-5.93 L-3.03,-5.57 L-3.60,-5.18 L-4.13,-4.75Z"/><path d="M9.08,-3.13 L9.38,-2.05 L9.55,-0.96 L9.60,0.16 L9.52,1.26 L9.31,2.36 L8.97,3.42 L8.52,4.43 L7.95,5.39 L7.27,6.27 L6.49,7.07 L5.63,7.77 L4.70,8.37 L3.70,8.86 L2.65,9.23 L2.65,9.23 L3.44,8.43 L4.12,7.61 L4.68,6.78 L5.15,5.96 L5.53,5.14 L5.82,4.34 L6.05,3.56 L6.21,2.80 L6.31,2.06 L6.37,1.34 L6.38,0.63 L6.35,-0.06 L6.27,-0.75 L6.14,-1.42Z"/><path d="M-2.81,9.18 L-3.85,8.79 L-4.84,8.29 L-5.77,7.67 L-6.62,6.96 L-7.38,6.14 L-8.04,5.25 L-8.59,4.28 L-9.03,3.26 L-9.35,2.19 L-9.54,1.10 L-9.60,-0.01 L-9.53,-1.12 L-9.34,-2.22 L-9.02,-3.28 L-9.02,-3.28 L-8.84,-2.17 L-8.58,-1.14 L-8.24,-0.20 L-7.85,0.67 L-7.41,1.45 L-6.94,2.16 L-6.44,2.80 L-5.92,3.38 L-5.38,3.90 L-4.83,4.37 L-4.26,4.79 L-3.68,5.17 L-3.08,5.51 L-2.46,5.80Z"/></g></svg>
<span class="t" style="left:556.58px;top:845px;font-size:19.8px;color:#666;transform:scaleX(1.1940);">pajak</span>
</div></div>
<div id="pill"></div>
<div class="abs" style="left:404px;top:932px;width:22px;height:27px;background:#000;"></div>
<span class="t g" style="left:348.57px;top:938px;font-size:18.4px;color:#fff;font-weight:700;transform:scaleX(1.0278);">Page</span>
<span class="t g" style="left:410.00px;top:938px;font-size:18.4px;color:#fff;font-weight:700;transform:scaleX(0.9019);">1</span>
<span class="t g" style="left:435.81px;top:936px;font-size:23px;color:#fff;font-weight:700;transform:scaleX(1.6735);">/</span>
<span class="t g" style="left:457.14px;top:939px;font-size:18.4px;color:#fff;font-weight:700;transform:scaleX(0.9598);">1</span>
</div>
</div>
<div id="rstrip"></div>
<div id="topline"></div>
</body></html>
